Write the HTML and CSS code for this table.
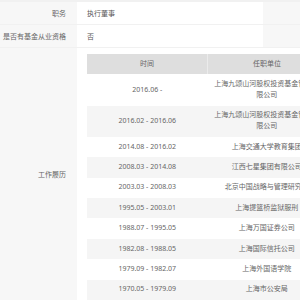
FILE: index.html
```html
<!DOCTYPE html>
<html lang="zh">
<head>
  <meta charset="UTF-8">
  <title>基金经理信息</title>
  <link rel="stylesheet" href="styles.css">
</head>
<body>

  <div class="info">
    <div class="label">职务</div>
    <div class="value">执行董事</div>
    <div class="side"></div>

    <div class="label">是否有基金从业资格</div>
    <div class="value">否</div>
    <div class="side"></div>

    <div class="label label-mid">工作履历</div>
    <div class="value value-wide">
      <table class="history">
        <thead>
          <tr>
            <th class="col-time">时间</th>
            <th class="col-org">任职单位</th>
          </tr>
        </thead>
        <tbody>
          <tr><td>2016.06 -</td><td>上海九颂山河股权投资基金管理有限公司</td></tr>
          <tr><td>2016.02 - 2016.06</td><td>上海九颂山河股权投资基金管理有限公司</td></tr>
          <tr><td>2014.08 - 2016.02</td><td>上海交通大学教育集团</td></tr>
          <tr><td>2008.03 - 2014.08</td><td>江西七星集团有限公司</td></tr>
          <tr><td>2003.03 - 2008.03</td><td>北京中国战略与管理研究会</td></tr>
          <tr><td>1995.05 - 2003.01</td><td>上海提篮桥监狱服刑</td></tr>
          <tr><td>1988.07 - 1995.05</td><td>上海万国证券公司</td></tr>
          <tr><td>1982.08 - 1988.05</td><td>上海国际信托公司</td></tr>
          <tr><td>1979.09 - 1982.07</td><td>上海外国语学院</td></tr>
          <tr><td>1970.05 - 1979.09</td><td>上海市公安局</td></tr>
        </tbody>
      </table>
    </div>
  </div>

</body>
</html>
```

FILE: styles.css
```css
html, body {
  overflow: hidden;
}

body {
  margin: 0;
  padding: 0;
  font-family: "Noto Sans", "Noto Sans CJK SC", sans-serif;
  font-size: 7px;
  line-height: 10.8px;
  color: #666;
  background-color: #f7f7f7;
}

.info {
  display: grid;
  grid-template-columns: 77px 186px 1fr;
  row-gap: 1px;
  padding-top: 2px;
  background-color: #f1f1f1;
}

.label {
  background-color: #f7f7f7;
  text-align: right;
  padding: 7px 11px 4px 0;
  white-space: nowrap;
}

.label-mid {
  display: flex;
  align-items: center;
  justify-content: flex-end;
}

.value {
  background-color: #fff;
  color: #555;
  padding: 7px 0 4px 10px;
}

.side {
  background-color: #f7f7f7;
}

.value-wide {
  grid-column: span 2;
  padding: 6px 0 0 10px;
}

.history {
  border-collapse: collapse;
  table-layout: fixed;
  width: 238px;
  color: #666;
}

.history th {
  background-color: #dedede;
  font-weight: normal;
  padding: 5px 4px;
}

.history th + th {
  border-left: 1px solid #ebebeb;
}

/* widths below are content widths, padding is added on top */
.col-time {
  width: 112px;
}

.col-org {
  width: 110px;
}

.history td {
  text-align: center;
  vertical-align: middle;
  padding: 4.8px 4px;
}

.history tbody tr:nth-child(even) td {
  background-color: #f5f5f5;
}

.history tbody tr:nth-child(odd) td {
  background-color: #fff;
}
```
